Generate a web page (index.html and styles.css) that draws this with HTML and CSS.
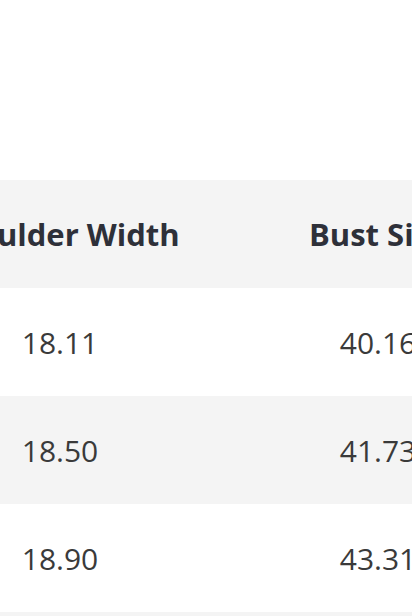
FILE: index.html
```html
<!DOCTYPE html>
<html>
<head>
<meta charset="utf-8">
<link rel="stylesheet" href="styles.css">
</head>
<body>
<div class="page">
  <div class="scroller" id="scroller">
    <table class="chart">
      <thead>
        <tr><th>Size</th><th>Shoulder Width</th><th>Bust Size</th><th>Sleeve Length</th><th>Length</th></tr>
      </thead>
      <tbody>
        <tr><td>S</td><td>18.11</td><td>40.16</td><td>24.41</td><td>27.17</td></tr>
        <tr><td>M</td><td>18.50</td><td>41.73</td><td>24.80</td><td>27.56</td></tr>
        <tr><td>L</td><td>18.90</td><td>43.31</td><td>25.20</td><td>27.95</td></tr>
        <tr><td>XL</td><td>19.29</td><td>44.88</td><td>25.59</td><td>28.35</td></tr>
      </tbody>
    </table>
  </div>
</div>
<script src="script.js"></script>
</body>
</html>
```

FILE: styles.css
```css
html, body {
  margin: 0;
  padding: 0;
  background: #ffffff;
}
.page {
  padding-top: 180px;
  font-family: "Open Sans", "Noto Sans", sans-serif;
}
.scroller {
  overflow-x: auto;
  scrollbar-width: none;
}
.scroller::-webkit-scrollbar {
  display: none;
}
.chart {
  border-collapse: collapse;
  table-layout: fixed;
  width: 1590px;
}
.chart th,
.chart td {
  width: 318px;
  height: 108px;
  padding: 0;
  text-align: center;
  vertical-align: middle;
  font-size: 30px;
  white-space: nowrap;
}
.chart th {
  font-size: 31px;
  font-weight: 700;
  color: #2e3039;
  background: #f4f4f4;
}
.chart td {
  font-weight: 400;
  color: #3a3a3a;
}
.chart tbody tr:nth-child(even) td {
  background: #f4f4f4;
}
```

FILE: script.js
```js
document.getElementById('scroller').scrollLeft = 417;
```
